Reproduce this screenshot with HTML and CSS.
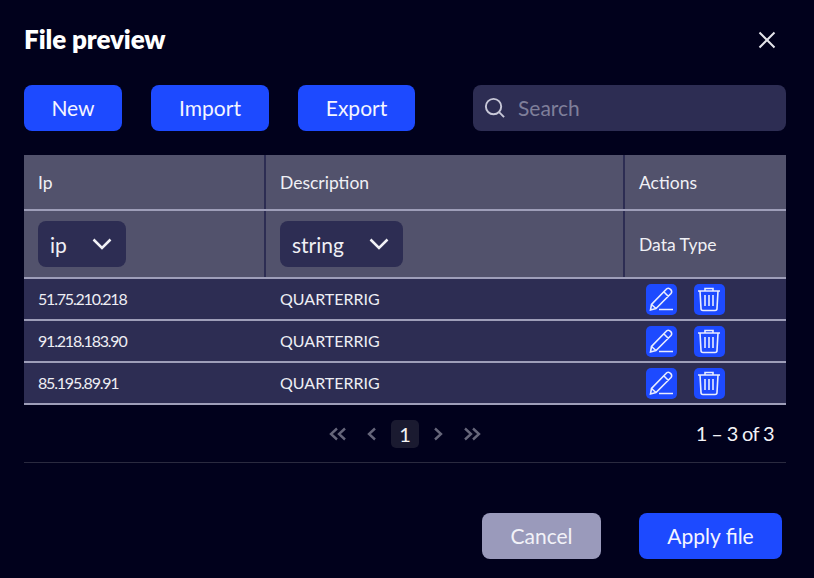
FILE: index.html
```html
<!DOCTYPE html>
<html lang="en">
<head>
<meta charset="utf-8">
<title>File preview</title>
<link rel="stylesheet" href="styles.css">
</head>
<body>
<main class="dialog">
  <header class="title-bar">
    <h1 class="title">File preview</h1>
    <button class="close" aria-label="Close"><svg width="20" height="20" viewBox="0 0 20 20"><path d="M2.500 2.500 17.500 17.500M17.500 2.500 2.500 17.500"/></svg></button>
  </header>
  <div class="toolbar">
    <button class="btn btn-new">New</button>
    <button class="btn btn-import">Import</button>
    <button class="btn btn-export">Export</button>
    <label class="search">
      <svg width="24" height="24" viewBox="0 0 24 24"><circle cx="11" cy="11" r="8"/><path d="M16.800 16.800 22 22"/></svg>
      <span>Search</span>
    </label>
  </div>
  <table class="grid">
    <colgroup><col class="col-ip"><col class="col-desc"><col></colgroup>
    <thead>
      <tr class="head-row"><th>Ip</th><th>Description</th><th>Actions</th></tr>
      <tr class="type-row">
        <th><span class="select select-ip">ip<svg width="20" height="12" viewBox="0 0 20 12"><path d="M1.500 1.500 10 10 18.500 1.500"/></svg></span></th>
        <th><span class="select select-string">string<svg width="20" height="12" viewBox="0 0 20 12"><path d="M1.500 1.500 10 10 18.500 1.500"/></svg></span></th>
        <th>Data Type</th>
      </tr>
    </thead>
    <tbody>
      <tr><td class="ip">51.75.210.218</td><td>QUARTERRIG</td><td><span class="actions">
        <button class="icon-btn" aria-label="Edit"><svg width="27" height="27" viewBox="0 0 27 27"><path d="M2.500 24 3.500 18.500 18 3.500a2.700 2.700 0 0 1 4.500 0 2.700 2.700 0 0 1 .5 4L8 22.500Z M3.500 18.500 8 22.500 M16 6 20.500 10.500 M11 23.500H25"/></svg></button>
        <button class="icon-btn" aria-label="Delete"><svg width="25" height="27" viewBox="0 0 25 27"><path d="M1 5H23 M8 5V2.500H16V5 M3 5 4 22.500a2 2 0 0 0 2 2H18a2 2 0 0 0 2-2L21 5 M8 9V20 M12 9V20 M16 9V20"/></svg></button>
      </span></td></tr>
      <tr><td class="ip">91.218.183.90</td><td>QUARTERRIG</td><td><span class="actions">
        <button class="icon-btn" aria-label="Edit"><svg width="27" height="27" viewBox="0 0 27 27"><path d="M2.500 24 3.500 18.500 18 3.500a2.700 2.700 0 0 1 4.500 0 2.700 2.700 0 0 1 .5 4L8 22.500Z M3.500 18.500 8 22.500 M16 6 20.500 10.500 M11 23.500H25"/></svg></button>
        <button class="icon-btn" aria-label="Delete"><svg width="25" height="27" viewBox="0 0 25 27"><path d="M1 5H23 M8 5V2.500H16V5 M3 5 4 22.500a2 2 0 0 0 2 2H18a2 2 0 0 0 2-2L21 5 M8 9V20 M12 9V20 M16 9V20"/></svg></button>
      </span></td></tr>
      <tr><td class="ip">85.195.89.91</td><td>QUARTERRIG</td><td><span class="actions">
        <button class="icon-btn" aria-label="Edit"><svg width="27" height="27" viewBox="0 0 27 27"><path d="M2.500 24 3.500 18.500 18 3.500a2.700 2.700 0 0 1 4.500 0 2.700 2.700 0 0 1 .5 4L8 22.500Z M3.500 18.500 8 22.500 M16 6 20.500 10.500 M11 23.500H25"/></svg></button>
        <button class="icon-btn" aria-label="Delete"><svg width="25" height="27" viewBox="0 0 25 27"><path d="M1 5H23 M8 5V2.500H16V5 M3 5 4 22.500a2 2 0 0 0 2 2H18a2 2 0 0 0 2-2L21 5 M8 9V20 M12 9V20 M16 9V20"/></svg></button>
      </span></td></tr>
    </tbody>
  </table>
  <div class="pager">
    <nav class="pages">
      <svg class="pg pg-first" width="18" height="14" viewBox="0 0 18 14"><path d="M8 1.500 2 7 8 12.500M16 1.500 10 7 16 12.500"/></svg>
      <svg class="pg pg-prev" width="10" height="14" viewBox="0 0 10 14"><path d="M8 1.500 2 7 8 12.500"/></svg>
      <span class="page-current">1</span>
      <svg class="pg pg-next" width="10" height="14" viewBox="0 0 10 14"><path d="M2 1.500 8 7 2 12.500"/></svg>
      <svg class="pg pg-last" width="18" height="14" viewBox="0 0 18 14"><path d="M2 1.500 8 7 2 12.500M10 1.500 16 7 10 12.500"/></svg>
    </nav>
    <span class="range">1 – 3 of 3</span>
  </div>
  <footer class="footer">
    <button class="btn btn-cancel">Cancel</button>
    <button class="btn btn-apply">Apply file</button>
  </footer>
</main>
</body>
</html>
```
FILE: styles.css
```css
* { box-sizing: border-box; }
html, body { margin: 0; height: 100%; }
body {
  background: #01011c;
  color: #f2f2f6;
  font-family: "Lato", "Open Sans", sans-serif;
  overflow: hidden;
}
svg { fill: none; stroke: currentColor; display: block; }
button { font: inherit; color: inherit; border: 0; padding: 0; background: none; }

.dialog { width: 814px; height: 578px; padding: 24px 28px 0 24px; }

.title-bar { display: flex; justify-content: space-between; align-items: center; height: 32px; }
.title { margin: 0 0 2px; font-size: 26px; font-weight: 800; letter-spacing: -0.100px; color: #fff; line-height: 30px; }
.close { margin-right: 9px; color: #e4e4ea; }
.close svg { stroke-width: 2; }

.toolbar { display: flex; align-items: stretch; height: 46px; margin-top: 29px; }
.btn { height: 46px; padding-bottom: 1px; border-radius: 8px; background: #1d4aff; color: #f4f5ff; font-size: 21px; }
.btn-new { width: 98px; }
.btn-import { width: 118px; margin-left: 29px; }
.btn-export { width: 117px; margin-left: 29px; }
.search {
  display: flex; align-items: center; flex: 1; margin-left: 58px; padding: 0 0 1px 10px; gap: 12px;
  background: #2d2d53; border-radius: 8px; color: #7f7f9a; font-size: 21px;
}
.search svg { color: #c8c8d8; stroke-width: 2; width: 23px; height: 23px; }

.grid { width: 762px; margin-top: 24px; border-collapse: collapse; table-layout: fixed; }
.col-ip { width: 241px; }
.col-desc { width: 359px; }
.grid th, .grid td { padding: 0 0 0 14px; text-align: left; font-weight: 400; border-right: 2px solid #2d2d53; border-bottom: 2px solid #9e9eb9; }
.grid th:last-child, .grid td:last-child { border-right: 0; }
.grid thead th { background: #52526c; font-size: 17.500px; color: #f0f0f5; }
.head-row th { height: 55px; }
.type-row th { height: 68px; }
.grid tbody td { background: #2d2d53; height: 42px; padding-bottom: 1px; font-size: 16px; color: #eeeef4; }
.grid tbody td.ip { letter-spacing: -1.200px; }

.select {
  display: inline-flex; align-items: center; justify-content: space-between; vertical-align: middle;
  height: 46px; padding: 0 14px 0 12px; background: #2d2d53; border-radius: 8px; font-size: 21px;
}
.select-ip { width: 88px; }
.select-string { width: 123px; }
.select svg { stroke-width: 2.500; color: #f2f2f6; }

.actions { display: flex; gap: 17px; padding: 1px 0 0 7px; }
.icon-btn {
  display: flex; align-items: center; justify-content: center;
  width: 31px; height: 31px; border-radius: 5px; background: #1d4aff; color: #e8ecff;
}
.icon-btn svg { stroke-width: 1.600; }

.pager { position: relative; display: flex; justify-content: flex-end; align-items: center; height: 58px; border-bottom: 1px solid #2a2a3f; padding: 0 12px 2px 0; }
.pages { position: absolute; left: 305px; top: 15px; display: flex; align-items: center; height: 28px; }
.pg { color: #66667a; stroke-width: 2.400; }
.pg-prev { margin-left: 20px; }
.pg-next { margin-left: 14px; }
.pg-last { margin-left: 20px; }
.page-current { width: 28px; height: 28px; margin-left: 14px; display: flex; align-items: center; justify-content: center; border-radius: 5px; background: #1a1a30; font-size: 20px; color: #f5f5f5; }
.range { font-size: 20px; letter-spacing: -0.650px; color: #f2f2f6; }

.footer { display: flex; justify-content: flex-end; gap: 38px; margin-top: 50px; padding-right: 4px; }
.btn-cancel { width: 119px; padding-bottom: 2px; background: #9a9abb; color: #f2f2f8; }
.btn-apply { width: 143px; padding-bottom: 2px; }
```
